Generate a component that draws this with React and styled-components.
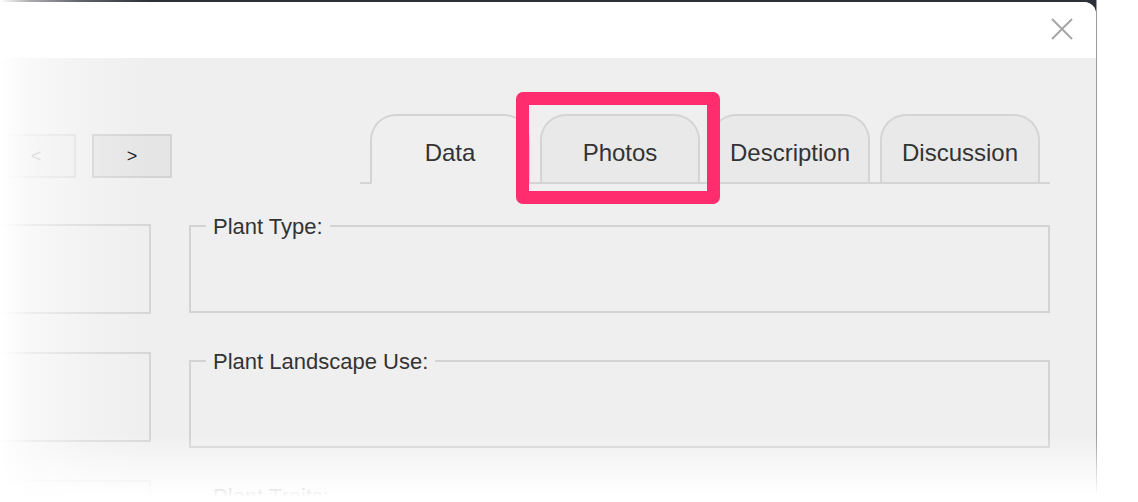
import React from "react";
import styled, { createGlobalStyle } from "styled-components";

const Global = createGlobalStyle`
  html, body { margin: 0; padding: 0; background: #fff; }
  body { font-family: "Liberation Sans", Arial, sans-serif; color: #333; }
  * { box-sizing: border-box; }
`;

const Page = styled.div`
  position: relative;
  width: 1138px;
  height: 502px;
  overflow: hidden;
  background: #fff;
`;

const Backdrop = styled.div`
  width: 1097px;
  height: 502px;
  padding-top: 2px;
  background: linear-gradient(to bottom, #2c3039 0, #2c3039 37px, transparent 37px);
  border-right: 1px solid #9a9a9a;
`;

const Dialog = styled.div`
  width: 1096px;
  height: 500px;
  border-top-right-radius: 12px;
  overflow: hidden;
  display: flex;
  flex-direction: column;
  background: #efefef;
`;

const Header = styled.div`
  height: 56px;
  flex: none;
  background: #fff;
  display: flex;
  align-items: center;
  justify-content: flex-end;
  padding-right: 22px;
`;

const CloseButton = styled.button`
  width: 24px;
  height: 24px;
  padding: 0;
  border: 0;
  background: none;
  display: flex;
  align-items: center;
  justify-content: center;
  margin-top: -2px;
`;

const Body = styled.div`
  flex: 1;
  padding: 56px 46px 0 0;
  display: flex;
  flex-direction: column;
`;

const Toolbar = styled.div`
  display: flex;
  align-items: flex-start;
  height: 70px;
`;

const Nav = styled.div`
  display: flex;
  gap: 16px;
  margin: 20px 0 0 -4px;
`;

const NavButton = styled.button`
  width: 80px;
  height: 44px;
  border: 2px solid ${(p) => (p.disabled ? "#dedede" : "#d3d3d3")};
  background: ${(p) => (p.disabled ? "#ececec" : "#e5e5e5")};
  color: ${(p) => (p.disabled ? "#b5b5b5" : "#111")};
  font-family: "Liberation Sans", Arial, sans-serif;
  font-size: 18px;
  padding: 0;
`;

const TabStrip = styled.div`
  margin-left: auto;
  width: 690px;
  height: 70px;
  padding-left: 10px;
  display: flex;
  align-items: flex-end;
  gap: 10px;
  border-bottom: 2px solid #d4d4d4;
`;

const Tab = styled.div`
  position: relative;
  width: 160px;
  height: ${(p) => (p.$active ? "70px" : "68px")};
  margin-bottom: ${(p) => (p.$active ? "-2px" : "0")};
  border: 2px solid #d4d4d4;
  border-bottom: 0;
  border-radius: 26px 26px 0 0;
  background: ${(p) => (p.$active ? "#efefef" : "#e9e9e9")};
  display: flex;
  align-items: ${(p) => (p.$active ? "flex-start" : "center")};
  justify-content: center;
  padding-top: ${(p) => (p.$active ? "23px" : "8px")};
  font-size: 24px;
  line-height: 28px;
  color: #333;
`;

const Highlight = styled.div`
  position: absolute;
  left: -26px;
  top: -24px;
  right: -22px;
  bottom: -22px;
  border: 13px solid #ff2d6e;
  border-radius: 7px;
  z-index: 2;
  pointer-events: none;
`;

const Fields = styled.div`
  display: grid;
  grid-template-columns: 191px 861px;
  column-gap: 38px;
  margin-left: -40px;
`;

const Column = styled.div`
  display: flex;
  flex-direction: column;
  gap: ${(p) => p.$gap}px;
  padding-top: ${(p) => p.$top}px;
`;

const Box = styled.div`
  height: 90px;
  flex: none;
  border: 2px solid #d6d6d6;
`;

const Group = styled.fieldset`
  margin: 0;
  padding: 0 12px 0 15px;
  border: 2px solid #d3d3d3;
  min-width: 0;
  flex: none;
`;

const Legend = styled.legend`
  padding: 3px 7px 0;
  font-size: 22px;
  line-height: 26px;
  color: #333;
`;

const GroupContent = styled.div`
  height: 71px;
`;

const Fade = styled.div`
  position: absolute;
  inset: 0;
  pointer-events: none;
  background:
    linear-gradient(to right, #fff 0, rgba(255,255,255,0.6) 30px, rgba(255,255,255,0.25) 80px, rgba(255,255,255,0) 150px),
    linear-gradient(to bottom, rgba(255,255,255,0) 435px, rgba(255,255,255,0.6) 470px, #fff 497px);
`;

const tabs = ["Data", "Photos", "Description", "Discussion"];
const groups = ["Plant Type:", "Plant Landscape Use:", "Plant Traits:"];

export default function App() {
  return (
    <Page>
      <Global />
      <Backdrop>
        <Dialog>
          <Header>
            <CloseButton aria-label="Close">
              <svg width="22" height="22" viewBox="0 0 22 22">
                <path d="M1 1 L21 21 M21 1 L1 21" stroke="#a6a6a6" strokeWidth="2" fill="none" />
              </svg>
            </CloseButton>
          </Header>
          <Body>
            <Toolbar>
              <Nav>
                <NavButton disabled>&lt;</NavButton>
                <NavButton>&gt;</NavButton>
              </Nav>
              <TabStrip>
                {tabs.map((t, i) => (
                  <Tab key={t} $active={i === 0}>
                    {t}
                    {t === "Photos" && <Highlight />}
                  </Tab>
                ))}
              </TabStrip>
            </Toolbar>
            <Fields>
              <Column $top={40} $gap={38}>
                <Box />
                <Box />
                <Box />
              </Column>
              <Column $top={27} $gap={33}>
                {groups.map((g) => (
                  <Group key={g}>
                    <Legend>{g}</Legend>
                    <GroupContent />
                  </Group>
                ))}
              </Column>
            </Fields>
          </Body>
        </Dialog>
      </Backdrop>
      <Fade />
    </Page>
  );
}
